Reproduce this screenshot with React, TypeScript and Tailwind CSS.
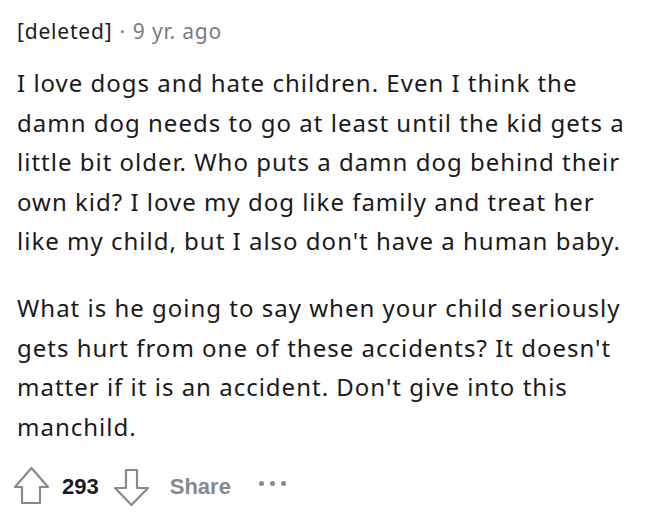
import React from "react";

function UpArrow() {
  return (
    <svg width="36" height="40" viewBox="0 0 36 40" className="shrink-0">
      <path
        d="M17.5 2 L34 21 L26 21 L26 37 L8 37 L8 21 L1 21 Z"
        fill="none"
        stroke="#878a8c"
        strokeWidth="2.2"
        strokeLinejoin="round"
      />
    </svg>
  );
}

function DownArrow() {
  return (
    <svg width="36" height="40" viewBox="0 0 36 40" className="shrink-0">
      <path
        d="M12 4 L23 4 L23 22 L34 22 L17.5 39 L1 22 L12 22 Z"
        fill="none"
        stroke="#878a8c"
        strokeWidth="2.2"
        strokeLinejoin="round"
      />
    </svg>
  );
}

export default function App() {
  return (
    <div
      className="w-[666px] h-[518px] bg-white pl-[17px] pt-[17px] text-[#1a1a1b]"
      style={{ fontFamily: '"Noto Sans", sans-serif' }}
    >
      <div className="text-[21px] leading-[28px] tracking-[0.8px] flex items-center">
        <span className="text-[#1c1c1c]">[deleted]</span>
        <span className="text-[#7c7c7c] ml-[7px]">·</span>
        <span className="text-[#7c7c7c] ml-[7px]">9 yr. ago</span>
      </div>
      <div className="mt-[18px] text-[24px] leading-[39.5px] tracking-[1px]">
        <p>
          I love dogs and hate children. Even I think the
          <br />
          damn dog needs to go at least until the kid gets a
          <br />
          little bit older. Who puts a damn dog behind their
          <br />
          own kid? I love my dog like family and treat her
          <br />
          like my child, but I also don't have a human baby.
        </p>
        <p className="mt-[27.5px]">
          What is he going to say when your child seriously
          <br />
          gets hurt from one of these accidents? It doesn't
          <br />
          matter if it is an accident. Don't give into this
          <br />
          manchild.
        </p>
      </div>
      <div
        className="mt-[20px] h-[40px] flex items-center -ml-[3px]"
        style={{ fontFamily: '"Liberation Sans", Arial, sans-serif' }}
      >
        <UpArrow />
        <span className="ml-[12px] text-[22px] font-bold text-[#1a1a1b]">293</span>
        <span className="ml-[15px]">
          <DownArrow />
        </span>
        <span className="ml-[20px] text-[22px] font-bold text-[#878a8c]">Share</span>
        <span className="ml-[28px] flex gap-[6px] -mt-[6px]">
          <span className="w-[5px] h-[5px] rounded-full bg-[#878a8c]" />
          <span className="w-[5px] h-[5px] rounded-full bg-[#878a8c]" />
          <span className="w-[5px] h-[5px] rounded-full bg-[#878a8c]" />
        </span>
      </div>
    </div>
  );
}
